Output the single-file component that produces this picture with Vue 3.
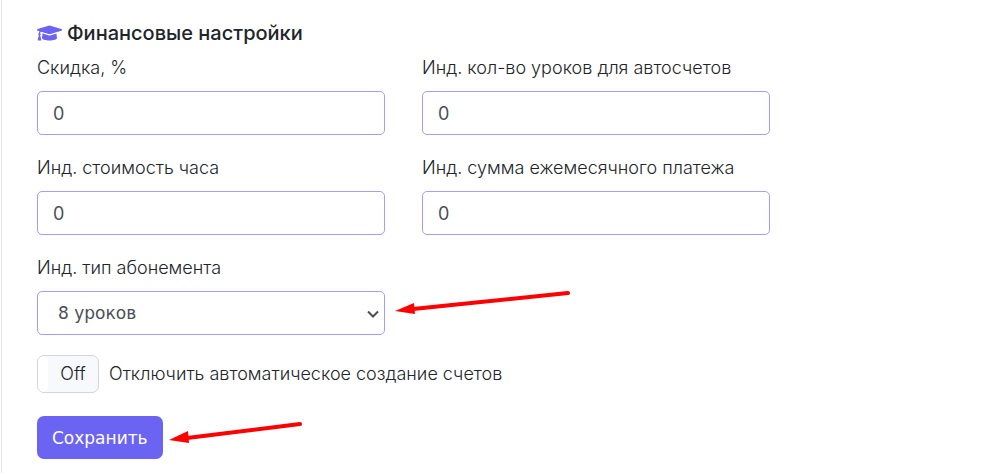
<script setup>
import { reactive, ref } from 'vue'

const fields = reactive([
  { id: 'discount', label: 'Скидка, %', value: '0' },
  { id: 'lessons', label: 'Инд. кол-во уроков для автосчетов', value: '0' },
  { id: 'hour-price', label: 'Инд. стоимость часа', value: '0' },
  { id: 'monthly', label: 'Инд. сумма ежемесячного платежа', value: '0' },
])
const plan = ref('8')
const invoicesOff = ref(false)
</script>

<template>
  <main class="page">
    <form class="settings" @submit.prevent>
      <h1 class="title">
        <svg class="cap" viewBox="0 0 640 512" aria-hidden="true">
          <path d="M622.34 153.2L343.4 67.5c-15.2-4.67-31.6-4.67-46.79 0L17.66 153.2c-23.54 7.23-23.54 38.36 0 45.59l48.63 14.94c-10.67 13.19-17.23 29.28-17.88 46.9C38.78 266.15 32 276.11 32 288c0 10.78 5.68 19.85 13.86 25.65L20.33 428.53C18.11 438.52 25.71 448 35.94 448h56.11c10.24 0 17.84-9.48 15.62-19.47L82.14 313.65C90.32 307.85 96 298.78 96 288c0-11.57-6.47-21.25-15.66-26.87.76-15.02 8.44-28.3 20.69-36.72L296.6 284.5c9.06 2.78 26.44 6.25 46.79 0l278.95-85.7c23.55-7.24 23.55-38.36 0-45.6zM352.79 315.09c-28.53 8.76-52.84 3.92-65.59 0l-145.02-44.55L128 384c0 35.35 85.96 64 192 64s192-28.65 192-64l-14.18-113.47-145.03 44.56z" />
        </svg>
        Финансовые настройки
      </h1>

      <div class="grid">
        <div v-for="f in fields" :key="f.id" class="field">
          <label :for="f.id">{{ f.label }}</label>
          <input :id="f.id" v-model="f.value" class="control" type="text" inputmode="numeric">
        </div>
        <div class="field">
          <label for="plan">Инд. тип абонемента</label>
          <div class="select-wrap">
            <select id="plan" v-model="plan" class="control">
              <option value="8">8 уроков</option>
            </select>
            <svg class="chevron" viewBox="0 0 12 8" aria-hidden="true"><path d="M1 1.500L6 6.500l5-5" /></svg>
            <svg class="arrow arrow-long" viewBox="0 0 176 26" aria-hidden="true">
              <path class="shaft" d="M18 19L173 3" />
              <path class="head" d="M0 21L19 13L20 24Z" />
            </svg>
          </div>
        </div>
      </div>

      <div class="switch-row">
        <label class="switch" for="invoices">
          <input id="invoices" v-model="invoicesOff" type="checkbox" role="switch" aria-labelledby="invoices-text">
          <span class="switch-text">{{ invoicesOff ? 'On' : 'Off' }}</span>
        </label>
        <label id="invoices-text" for="invoices">Отключить автоматическое создание счетов</label>
      </div>

      <div class="actions">
        <button class="save" type="submit">Сохранить</button>
        <svg class="arrow arrow-short" viewBox="0 0 134 24" aria-hidden="true">
          <path class="shaft" d="M18 17L131 3" />
          <path class="head" d="M0 19L19 10L20 22Z" />
        </svg>
      </div>
    </form>
  </main>
</template>

<style>
body {
  background: #fff;
}
</style>

<style scoped>
.page {
  box-sizing: border-box;
  min-height: 100vh;
  margin-left: 1px;
  padding: 20px 35px 14px;
  border-left: 1px solid #e9e9ee;
  color: #212529;
  font: 300 18px/26px Inter, "Liberation Sans", sans-serif;
}
.settings {
  max-width: 733px;
}
.title {
  display: flex;
  align-items: center;
  gap: 5px;
  margin: 0 0 9px;
  font-size: 20px;
  line-height: 26px;
  font-weight: 500;
}
.cap {
  width: 25px;
  height: 20px;
  fill: #6b63f2;
}
.grid {
  display: grid;
  grid-template-columns: 1fr 1fr;
  gap: 20px 37px;
}
.field {
  display: flex;
  flex-direction: column;
  gap: 10px;
}
.control {
  display: block;
  box-sizing: border-box;
  width: 100%;
  height: 44px;
  margin: 0;
  padding: 0 15px;
  border: 1px solid #a59df6;
  border-radius: 5px;
  background: #fff;
  color: #495057;
  font: 400 18px/26px Inter, "Liberation Sans", sans-serif;
}
select.control {
  padding: 0 20px;
  appearance: none;
  font: 400 17px/26px "DejaVu Sans", sans-serif;
}
.select-wrap {
  position: relative;
}
.chevron {
  position: absolute;
  top: 19px;
  right: 6px;
  width: 12px;
  height: 8px;
  fill: none;
  stroke: #495057;
  stroke-width: 2;
  pointer-events: none;
}
.arrow {
  position: absolute;
  pointer-events: none;
}
.arrow-long {
  top: -1px;
  left: calc(100% + 10px);
  width: 176px;
  height: 26px;
}
.arrow-short {
  top: 5px;
  left: calc(100% + 6px);
  width: 134px;
  height: 24px;
}
.shaft {
  fill: none;
  stroke: #fe0000;
  stroke-width: 4;
  stroke-linecap: round;
}
.head {
  fill: #fe0000;
}
.switch-row {
  display: flex;
  align-items: center;
  gap: 10px;
  margin-top: 20px;
}
.switch {
  position: relative;
  display: flex;
  box-sizing: border-box;
  width: 62px;
  height: 38px;
  overflow: hidden;
  border: 1px solid #d3d4d8;
  border-radius: 7px;
  background: #f8f9fc;
  cursor: pointer;
}
.switch::before {
  content: "";
  width: 10px;
  border-radius: 0 6px 6px 0;
  background: #fff;
}
.switch input {
  position: absolute;
  inset: 0;
  width: 100%;
  height: 100%;
  margin: 0;
  opacity: 0;
}
.switch-text {
  flex: 1;
  line-height: 36px;
  text-align: center;
}
.actions {
  position: relative;
  width: fit-content;
  margin-top: 23px;
}
.save {
  display: block;
  height: 43px;
  padding: 0 15px;
  border: 0;
  border-radius: 7px;
  background: #6b63f2;
  color: #fff;
  font: 500 17px/26px "DejaVu Sans", sans-serif;
}
</style>
